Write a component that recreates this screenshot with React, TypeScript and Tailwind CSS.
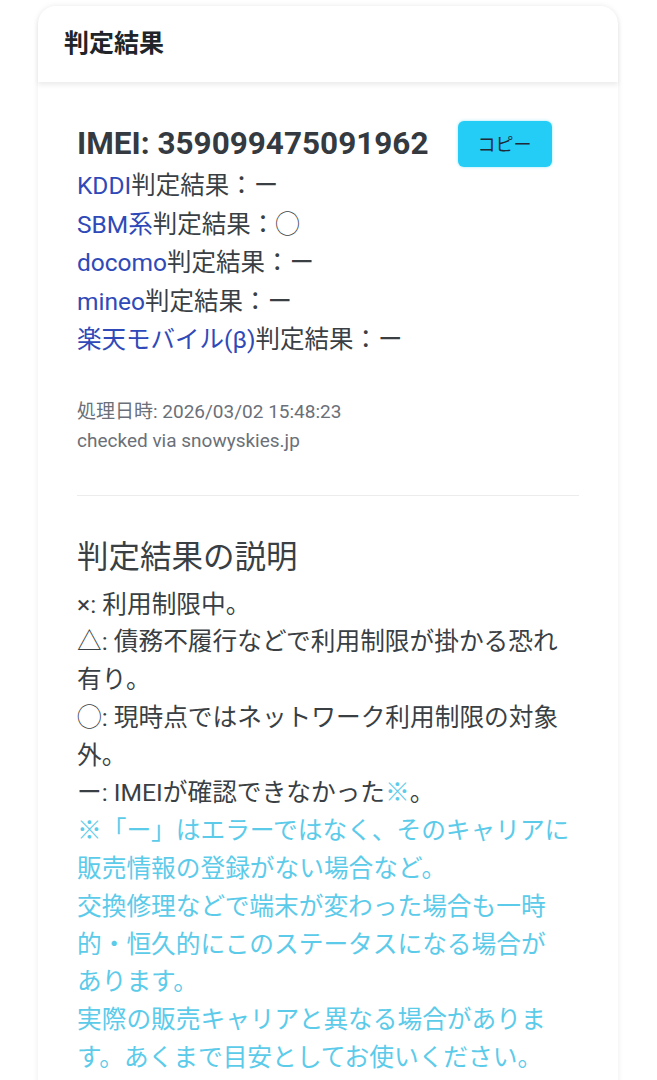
import React from "react";

const font = { fontFamily: "Roboto, 'Noto Sans CJK JP', sans-serif" };

export default function App() {
  const carriers: [string, string][] = [
    ["KDDI", "ー"],
    ["SBM系", "◯"],
    ["docomo", "ー"],
    ["mineo", "ー"],
    ["楽天モバイル(β)", "ー"],
  ];
  return (
    <div className="min-h-[1080px] bg-white pt-[6px] pl-[38px]" style={font}>
      <div className="w-[580px] rounded-t-[18px] bg-white shadow-[0_0_6px_rgba(0,0,0,0.08)]">
        <div className="h-[76px] flex items-center pl-[26px] rounded-t-[18px] shadow-[0_3px_5px_rgba(0,0,0,0.08)] relative">
          <span className="text-[25px] font-bold text-[#212529]">判定結果</span>
        </div>
        <div className="px-[39px] pt-[39px] pb-[40px]">
          <div className="flex items-center h-[46px]">
            <span className="text-[31.5px] font-bold text-[#343a40] leading-none">
              IMEI: 359099475091962
            </span>
            <button className="ml-[29px] w-[94px] h-[46px] rounded-[6px] bg-[#24cdf5] text-[18px] text-[#1f2937] shadow-[0_0_3px_rgba(34,203,243,0.5)]">
              コピー
            </button>
          </div>
          <div className="text-[24.5px] leading-[38.5px] text-[#3a3f44]">
            {carriers.map(([c, r]) => (
              <div key={c}>
                <span className="text-[#2f4ab8]">{c}</span>判定結果：{r}
              </div>
            ))}
          </div>
          <div className="mt-[37px] text-[19px] leading-[29px] text-[#6b7078]">
            <div>処理日時: 2026/03/02 15:48:23</div>
            <div>checked via snowyskies.jp</div>
          </div>
          <div className="mt-[40px] h-px bg-[#ececec]" />
          <div className="mt-[39px] text-[31.5px] leading-[45px] text-[#3a3f44]">判定結果の説明</div>
          <div className="mt-[6px] text-[24.7px] leading-[37.8px] text-[#3a3f44]">
            <div>×: 利用制限中。</div>
            <div>
              △: 債務不履行などで利用制限が掛かる恐れ
              <br />
              有り。
            </div>
            <div>
              ◯: 現時点ではネットワーク利用制限の対象
              <br />
              外。
            </div>
            <div>
              ー: IMEIが確認できなかった<span className="text-[#5ccbea]">※</span>。
            </div>
            <div className="text-[#5ccbea]">
              ※「ー」はエラーではなく、そのキャリアに
              <br />
              販売情報の登録がない場合など。
              <br />
              交換修理などで端末が変わった場合も一時
              <br />
              的・恒久的にこのステータスになる場合が
              <br />
              あります。
              <br />
              実際の販売キャリアと異なる場合がありま
              <br />
              す。あくまで目安としてお使いください。
            </div>
          </div>
        </div>
      </div>
    </div>
  );
}
